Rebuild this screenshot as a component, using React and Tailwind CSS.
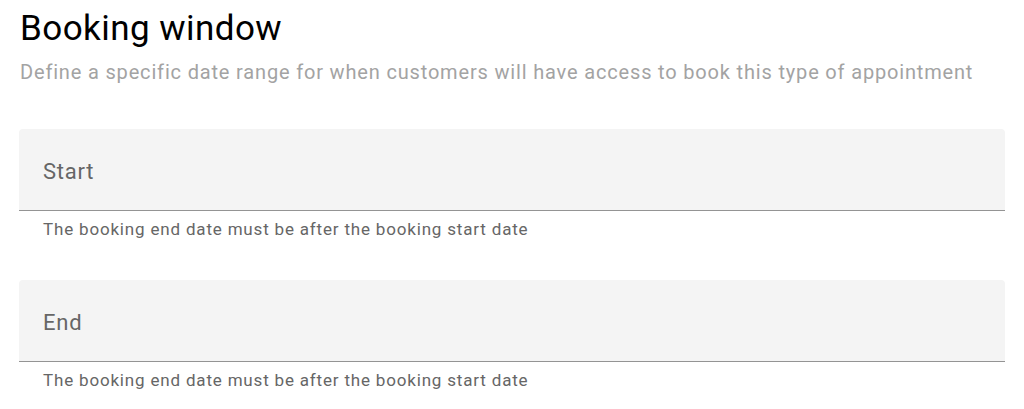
import React from "react";

function DateField({ label }) {
  return (
    <div>
      <div className="flex h-[82px] items-center rounded-t-[4px] border-b border-[#949494] bg-[#f4f4f4] px-6 pt-[3px]">
        <span className="text-[22px] tracking-[0.75px] text-[#666666]">{label}</span>
      </div>
      <p className="mt-[8px] px-6 text-[17px] leading-[20px] tracking-[0.82px] text-[#666666]">
        The booking end date must be after the booking start date
      </p>
    </div>
  );
}

export default function App() {
  return (
    <div className="bg-white px-[19px] pt-[7px] font-['Roboto',sans-serif]">
      <h2 className="pl-px text-[35px] leading-[44px] tracking-[0.45px] text-black">Booking window</h2>
      <p className="mt-[9px] pl-px text-[20px] leading-[24px] tracking-[0.83px] text-[#a3a3a3]">
        Define a specific date range for when customers will have access to book this type of appointment
      </p>

      <div className="mt-[45px] flex w-[986px] flex-col gap-[41px]">
        <DateField label="Start" />
        <DateField label="End" />
      </div>
    </div>
  );
}
